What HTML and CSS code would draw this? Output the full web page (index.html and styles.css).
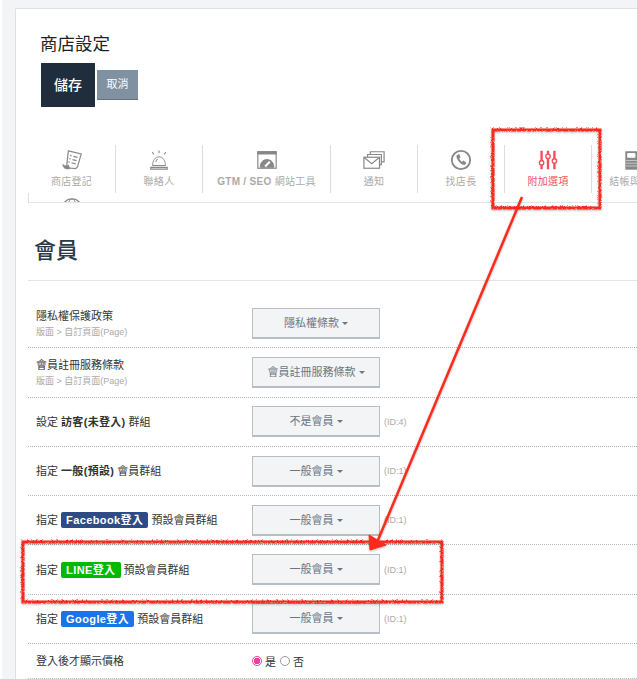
FILE: index.html
```html
<!DOCTYPE html>
<html>
<head>
<meta charset="utf-8">
<title>商店設定</title>
<link rel="stylesheet" href="styles.css">
</head>
<body>

<div class="card">
  <h1>商店設定</h1>
  <div class="actions">
    <a class="btn-save">儲存</a>
    <a class="btn-cancel">取消</a>
  </div>

  <div class="tabs">
    <a class="tab tab-first">
      <svg class="ico" viewBox="0 0 24 24"><path d="M8 2l14 3.500-4 14-2 2-10-1z" fill="#fff" stroke-width="1.300"/><path d="M2 17c2 2 5 2 6 .5l1.500 4H6c-2 0-4-2-4-4.500z" fill="#888"/><path d="M10 7l1.500.4M13.500 8l4.500 1.200M9 10.500l1.500.4M12.500 11.500l4.500 1.200M8 14l1.500.4M11.500 15l4.500 1.200" stroke-width="1.400"/></svg>
      <span>商店登記</span>
    </a>
    <a class="tab">
      <svg class="ico" viewBox="0 0 24 24"><path d="M5 18c0-5 2.500-9.500 7-9.500s7 4.500 7 9.500z"/><path d="M8.500 14c.3-1.500 1-2.500 2-3.200M3 20h18v2H3zM5 18h14M12 1.500v3M4.500 3.500l2 2.500M19.500 3.500l-2 2.500" stroke-width="1.200"/></svg>
      <span>聯絡人</span>
    </a>
    <a class="tab tab-wide">
      <svg class="ico" viewBox="0 0 24 24"><rect x="2" y="3" width="20" height="18" fill="#fff" stroke-width="1.300"/><path d="M2 3h20v2.500H2z" fill="#888"/><path d="M4.500 20c0-5 3-8.500 7.500-8.500s7.500 3.500 7.500 8.500z" fill="#888"/><path d="M10 19l5-5" stroke="#fff" stroke-width="2.200"/></svg>
      <span><b>GTM / SEO</b> 網站工具</span>
    </a>
    <a class="tab">
      <svg class="ico" viewBox="0 0 24 24"><path d="M8 6V3h15v11h-3M5 9V6h15v11h-2" stroke-width="1.300"/><rect x="1" y="9" width="17" height="12" fill="#fff" stroke-width="1.300"/><path d="M1 9l8.500 7L18 9" stroke-width="1.300"/></svg>
      <span>通知</span>
    </a>
    <a class="tab">
      <svg class="ico" viewBox="0 0 24 24"><circle cx="12" cy="12" r="10" stroke-width="2"/><path d="M7 7c-.5 4 5 10.500 9 10.500l2-2.500-3.500-2.500-1.500 1.500c-1.200-1-2.300-2.500-3-4l1.500-1-1.500-3.500z" fill="#888" stroke="none"/></svg>
      <span>找店長</span>
    </a>
    <a class="tab active">
      <svg class="ico" viewBox="0 0 24 24"><path d="M5 2v20M12 2v20M19 2v20" stroke-width="2.600"/><circle cx="5" cy="15" r="2.400" fill="#fff" stroke-width="1.500"/><circle cx="12" cy="8" r="2.400" fill="#fff" stroke-width="1.500"/><circle cx="19" cy="13" r="2.400" fill="#fff" stroke-width="1.500"/></svg>
      <span>附加選項</span>
    </a>
    <a class="tab">
      <svg class="ico" viewBox="0 0 24 24"><rect x="2" y="3" width="20" height="19" fill="#888" stroke="#888"/><path d="M4 5h8v4H4zM15 6.500h5" fill="#fff" stroke="#fff"/><path d="M2 12.500h20M2 15.500h20M2 18.500h20" stroke="#ccc"/></svg>
      <span>結帳與物流</span>
    </a>
    <a class="tab tab-next">
      <svg class="ico" viewBox="0 0 24 24"><circle cx="12" cy="12" r="11" stroke-width="1.300"/><ellipse cx="12" cy="12" rx="5" ry="11"/><path d="M2 7h20"/></svg>
    </a>
  </div>

  <h2>會員</h2>

  <div class="form">
    <div class="row">
      <div class="label">隱私權保護政策<small>版面 &gt; 自訂頁面(Page)</small></div>
      <div class="field"><a class="pick">隱私權條款<i class="caret"></i></a></div>
    </div>
    <div class="row">
      <div class="label">會員註冊服務條款<small>版面 &gt; 自訂頁面(Page)</small></div>
      <div class="field"><a class="pick">會員註冊服務條款<i class="caret"></i></a></div>
    </div>
    <div class="row">
      <div class="label">設定 <b>訪客(未登入)</b> 群組</div>
      <div class="field"><a class="pick">不是會員<i class="caret"></i></a><span class="id">(ID:4)</span></div>
    </div>
    <div class="row">
      <div class="label">指定 <b>一般(預設)</b> 會員群組</div>
      <div class="field"><a class="pick">一般會員<i class="caret"></i></a><span class="id">(ID:1)</span></div>
    </div>
    <div class="row">
      <div class="label">指定 <span class="badge fb">Facebook登入</span> 預設會員群組</div>
      <div class="field"><a class="pick">一般會員<i class="caret"></i></a><span class="id">(ID:1)</span></div>
    </div>
    <div class="row">
      <div class="label">指定 <span class="badge line">LINE登入</span> 預設會員群組</div>
      <div class="field"><a class="pick">一般會員<i class="caret"></i></a><span class="id">(ID:1)</span></div>
    </div>
    <div class="row">
      <div class="label">指定 <span class="badge google">Google登入</span> 預設會員群組</div>
      <div class="field"><a class="pick">一般會員<i class="caret"></i></a><span class="id">(ID:1)</span></div>
    </div>
    <div class="row row-short">
      <div class="label">登入後才顯示價格</div>
      <div class="field radios">
        <i class="radio on"></i><span>是</span>
        <i class="radio"></i><span>否</span>
      </div>
    </div>
  </div>
</div>

<!-- red markup drawn on top of the screenshot -->
<svg class="markup" viewBox="0 0 637 679" width="637" height="679">
  <defs>
    <filter id="rough" x="-5%" y="-5%" width="110%" height="110%" color-interpolation-filters="sRGB">
      <feTurbulence type="turbulence" baseFrequency="0.8" numOctaves="1" seed="3" result="noise"/>
      <feDisplacementMap in="SourceGraphic" in2="noise" scale="2.200"/>
      <feDropShadow dx="0" dy="1" stdDeviation="1" flood-color="#000" flood-opacity="0.3"/>
    </filter>
    <filter id="shade" x="-5%" y="-5%" width="110%" height="110%">
      <feDropShadow dx="0" dy="1" stdDeviation="1" flood-color="#000" flood-opacity="0.3"/>
    </filter>
  </defs>
  <g filter="url(#rough)" fill="none" stroke="#fb2a1c" stroke-width="3">
    <rect x="492" y="129" width="107" height="78"/>
    <rect x="22" y="541" width="419" height="60"/>
  </g>
  <g filter="url(#shade)" stroke="#fb2a1c">
    <path d="M522 197L378 540" stroke-width="2.500"/>
    <path d="M370 550L369 535L386 545z" fill="#fb2a1c" stroke-width="1"/>
  </g>
</svg>

</body>
</html>
```

FILE: styles.css
```css
html, body { height: 100%; }
body {
  margin: 0;
  width: 637px;
  height: 679px;
  overflow: hidden;
  position: relative;
  background: #f3f4f6;
  border-left: 2px solid #fff;
  box-sizing: border-box;
  font: 11px "Liberation Sans", "Noto Sans CJK TC", sans-serif;
  color: #333;
}

.card {
  margin: 8px 0 0 13px;
  width: 622px;
  height: 671px;
  overflow: hidden;
  box-sizing: border-box;
  padding: 0 0 0 12px;
  background: #fff;
  border: 1px solid #dcdfe3;
  border-width: 1px 0 0 1px;
  border-radius: 2px 0 0 0;
}

h1 { margin: 0; padding: 23px 0 0 12px; height: 31px; font-size: 17.500px; line-height: 24px; font-weight: normal; color: #222; }

.actions { display: flex; align-items: center; margin-left: 13px; height: 44px; }
.btn-save { width: 54px; height: 44px; line-height: 44px; text-align: center; background: #1f2d3d; color: #fff; font-size: 14px; font-weight: 500; }
.btn-cancel { width: 41px; height: 30px; line-height: 29px; margin-left: 2px; box-sizing: border-box; text-align: center; background: #8091a1; border-bottom: 1px solid #66727f; color: #fff; font-size: 11px; }

.tabs {
  display: flex;
  flex-wrap: wrap;
  align-content: flex-start;
  width: 720px;
  height: 58px;
  margin-top: 38px;
  overflow: hidden;
  border-bottom: 1px solid #e2e4e6;
  box-sizing: border-box;
}
.tab {
  width: 87px;
  height: 48px;
  box-sizing: border-box;
  border-right: 1px solid #dedede;
  text-align: center;
  color: #aaa;
  font-size: 10px;
  letter-spacing: 0.3px;
  line-height: 14px;
}
.tab-first { width: 88px; }
.tab-wide { width: 128px; }
.tab-next { width: 87px; border-left: 1px solid #dedede; border-right: 0; padding-top: 5px; }
.tab span { display: block; margin-top: 4px; white-space: nowrap; }
.ico { display: block; width: 22px; height: 22px; margin: 4px auto 0; fill: none; stroke: #888; stroke-width: 1; }
.tab-next .ico { margin-top: 0; }
.tab.active { color: #f4505c; }
.tab.active .ico { stroke: #f4505c; }

h2 { margin: 0; padding: 33px 0 0 6px; height: 44px; font-size: 22px; line-height: 30px; font-weight: 500; color: #2a3a4a; border-bottom: 1px solid #e2e4e6; }

.form { padding-top: 18px; }
.row {
  display: flex;
  align-items: center;
  height: 49.300px;
  box-sizing: border-box;
  padding-left: 8px;
  border-bottom: 1px dotted #b5b5b5;
}
.row-short { height: 35px; }
.label { width: 216px; flex: none; font-size: 11px; line-height: 16px; color: #333; }
.label b { letter-spacing: 0.3px; }
.label small { display: block; margin-top: 2px; font-size: 9px; line-height: 12px; color: #aaa; }
.field { display: flex; align-items: center; color: #aaa; }
.pick {
  display: block;
  width: 128px;
  height: 31px;
  line-height: 29px;
  box-sizing: border-box;
  text-align: center;
  font-size: 11px;
  color: #6b7785;
  background: #f2f4f6;
  border: 1px solid #b7bdc4;
  border-bottom-width: 2px;
}
.caret { display: inline-block; margin-left: 3px; vertical-align: 2px; border: 3px solid transparent; border-top-color: #6b7785; border-bottom: 0; }
.id { margin-left: 4px; font-size: 9px; }

.badge { display: inline-block; padding: 0 5px; height: 16px; line-height: 16px; border-radius: 2px; color: #fff; font-weight: bold; letter-spacing: 0.4px; }
.fb { background: #2f4b85; }
.line { background: #00b900; }
.google { background: #1a73e8; }

.radios { color: #333; font-size: 11px; }
.radio { width: 10px; height: 10px; box-sizing: border-box; border: 1px solid #999; border-radius: 50%; background: #fff; margin: 0 3px 0 4px; }
.radio:first-child { margin-left: 0; }
.radio.on { border: 1px solid #ee3f9d; background: radial-gradient(circle, #ee3f9d 0 3px, #fff 3.500px); }

.markup { position: absolute; left: -2px; top: 0; pointer-events: none; }
```
